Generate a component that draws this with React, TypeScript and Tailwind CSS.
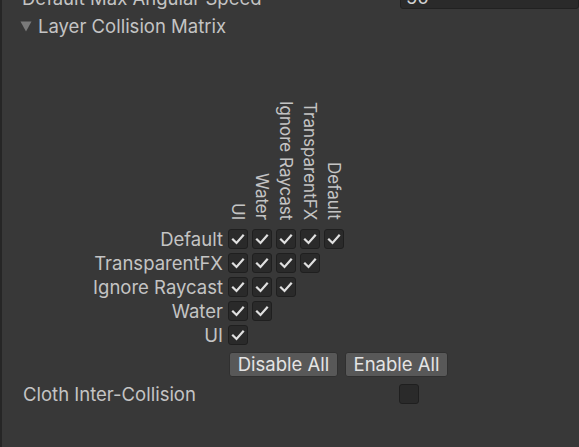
import React from "react";

const layers = ["Default", "TransparentFX", "Ignore Raycast", "Water", "UI"];
const cols = ["UI", "Water", "Ignore Raycast", "TransparentFX", "Default"];

function Check() {
  return (
    <svg width="20" height="20" viewBox="0 0 20 20" className="block">
      <polyline
        points="5,10.5 8.5,14 15,6.5"
        fill="none"
        stroke="#e0e0e0"
        strokeWidth="2.2"
        strokeLinecap="square"
      />
    </svg>
  );
}

function Box({ checked }: { checked: boolean }) {
  return (
    <div className="h-[20px] w-[20px] shrink-0 rounded-[3px] border border-[#1f1f1f] bg-[#2a2a2a]">
      {checked ? (
        <div className="-m-px">
          <Check />
        </div>
      ) : null}
    </div>
  );
}

export default function App() {
  return (
    <div
      className="flex h-[447px] w-[579px] overflow-hidden bg-[#383838] text-[18.5px] text-[#c4c4c4]"
      style={{ fontFamily: "Inter, 'Noto Sans', sans-serif" }}
    >
      <div className="w-[2px] shrink-0 bg-[#262626]" />
      <div className="flex min-w-0 flex-1 flex-col">
        {/* cut-off top row */}
        <div className="-mt-[13px] flex h-[22px] items-center">
          <div className="whitespace-nowrap pl-[20px] leading-[22px]">Default Max Angular Speed</div>
          <div className="ml-auto flex h-[22px] w-[179px] shrink-0 items-center rounded-[3px] border border-[#212121] bg-[#2a2a2a] pl-[5px] text-[#d2d2d2]">
            50
          </div>
        </div>

        {/* foldout header */}
        <div className="mt-[6px] flex h-[22px] items-center pl-[18px]">
          <svg width="12" height="12" viewBox="0 0 12 12" className="mr-[6px]">
            <polygon points="0.5,1.5 11.5,1.5 6,11.5" fill="#7a7a7a" />
          </svg>
          <span className="leading-[22px]">Layer Collision Matrix</span>
        </div>

        {/* column headers */}
        <div className="mt-[61px] flex h-[122px] items-end pl-[226px]">
          <div className="flex items-end gap-[4px]">
            {cols.map((c) => (
              <div
                key={c}
                className="w-[20px] whitespace-nowrap text-[17px] leading-[20px]"
                style={{ writingMode: "vertical-rl" }}
              >
                {c}
              </div>
            ))}
          </div>
        </div>

        {/* matrix rows */}
        <div className="mt-[9px] flex flex-col gap-[4px]">
          {layers.map((l, i) => (
            <div key={l} className="flex h-[20px] items-center">
              <div className="w-[222px] shrink-0 whitespace-nowrap pr-[1px] text-right leading-[20px]">{l}</div>
              <div className="flex gap-[4px] pl-[4px]">
                {cols.slice(0, 5 - i).map((c) => (
                  <Box key={c} checked />
                ))}
              </div>
            </div>
          ))}
        </div>

        {/* buttons */}
        <div className="mt-[7px] flex gap-[7px] pl-[227px]">
          <button className="h-[25px] w-[109px] rounded-[3px] border border-[#303030] bg-[#585858] leading-[23px] text-[#e4e4e4]">
            Disable All
          </button>
          <button className="h-[25px] w-[103px] rounded-[3px] border border-[#303030] bg-[#585858] leading-[23px] text-[#e4e4e4]">
            Enable All
          </button>
        </div>

        {/* cloth row */}
        <div className="mt-[7px] flex h-[20px] items-center">
          <div className="w-[397px] shrink-0 pl-[21px] leading-[20px]">Cloth Inter-Collision</div>
          <Box checked={false} />
        </div>
      </div>
    </div>
  );
}
